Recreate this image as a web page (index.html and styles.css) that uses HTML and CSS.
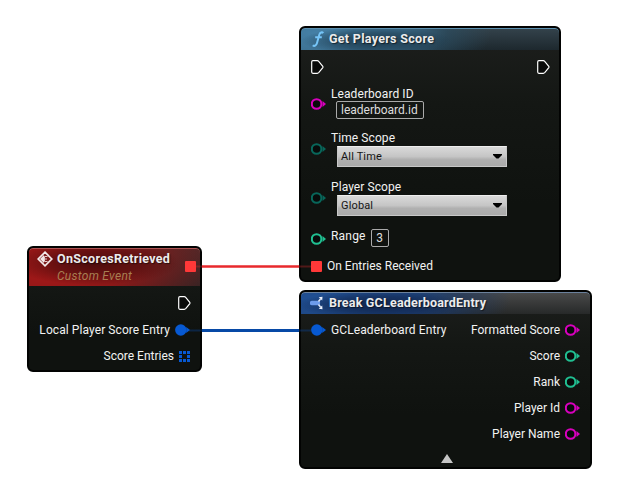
FILE: index.html
```html
<!DOCTYPE html>
<html lang="en">
<head>
<meta charset="utf-8">
<title>Blueprint graph</title>
<link rel="stylesheet" href="styles.css">
</head>
<body>
<svg class="defs" aria-hidden="true">
  <symbol id="pin" viewBox="0 0 16 12"><circle cx="5.6" cy="6" r="4.8" fill="#080b0a" stroke="currentColor" stroke-width="2.1"/><path d="M11.5 3L15 6L11.5 9Z" fill="currentColor"/></symbol>
  <symbol id="pin-full" viewBox="0 0 16 12"><circle cx="5.8" cy="6" r="5.7" fill="currentColor"/><path d="M11.2 3L15 6L11.2 9Z" fill="currentColor"/></symbol>
  <symbol id="exec" viewBox="0 0 13 14"><path d="M1.9.7H6.3Q7.1.7 7.7 1.3L11.8 6.4Q12.2 7 11.8 7.6L7.7 12.7Q7.1 13.3 6.3 13.3H1.9Q.7 13.3.7 12.1V1.9Q.7.7 1.9.7Z" fill="#090a09" stroke="#fff" stroke-width="1.2"/></symbol>
</svg>
<main class="graph">
  <section class="node call">
    <header class="head">
      <svg class="head-icon" width="16" height="18" viewBox="0 0 16 18"><path d="M13.2 3.2C12.2 1.8 10 2.1 9.2 5L7 13C6.3 15.7 4.3 16.6 2.8 15.2M5.2 7.2H11.8" fill="none" stroke="#76c5f8" stroke-width="2"/></svg>
      <h2>Get Players Score</h2>
    </header>
    <div class="row exec-row"><svg class="exec"><use href="#exec"/></svg><svg class="exec"><use href="#exec"/></svg></div>
    <div class="row field text-field"><svg class="pin magenta"><use href="#pin"/></svg><div><p>Leaderboard ID</p><span class="box id-box">leaderboard.id</span></div></div>
    <div class="row field"><svg class="pin enum"><use href="#pin"/></svg><div><p>Time Scope</p><div class="select"><span>All Time</span><svg width="9" height="5"><path d="M0 0H9V1L5.5 4.5H3.5L0 1Z"/></svg></div></div></div>
    <div class="row field"><svg class="pin enum"><use href="#pin"/></svg><div><p>Player Scope</p><div class="select"><span>Global</span><svg width="9" height="5"><path d="M0 0H9V1L5.5 4.5H3.5L0 1Z"/></svg></div></div></div>
    <div class="row range"><svg class="pin green"><use href="#pin"/></svg><p>Range</p><span class="box num-box">3</span></div>
    <div class="row delegate-row"><i class="delegate"></i><p>On Entries Received</p></div>
  </section>

  <section class="node event">
    <header class="head">
      <svg class="head-icon" width="16" height="16" viewBox="0 0 16 16"><path d="M8 1.2L14.8 8L8 14.8L1.2 8Z" fill="#7d1c1c" stroke="#f3e9e9" stroke-width="1.7"/><path d="M3 8L7 4V12Z" fill="#f3e9e9"/><path d="M10.5 5.5H7.5V10.5H10.5M7.5 8H10" fill="none" stroke="#e5caca" stroke-width="1"/></svg>
      <div class="titles"><h2>OnScoresRetrieved</h2><p class="sub">Custom Event</p></div>
      <i class="delegate"></i>
    </header>
    <div class="row out exec-out"><svg class="exec"><use href="#exec"/></svg></div>
    <div class="row out"><p class="local">Local Player Score Entry</p><svg class="pin blue"><use href="#pin-full"/></svg></div>
    <div class="row out array-row"><p>Score Entries</p><svg class="array" width="11" height="11" viewBox="0 0 11 11" shape-rendering="crispEdges"><path d="M0 0h3v3h-3zM4 0h3v3h-3zM8 0h3v3h-3zM0 4h3v3h-3zM8 4h3v3h-3zM0 8h3v3h-3zM4 8h3v3h-3zM8 8h3v3h-3z" fill="#0759d2"/></svg></div>
  </section>

  <section class="node break">
    <header class="head">
      <svg class="head-icon" width="14" height="16" viewBox="0 0 14 16"><path d="M2 8H8" stroke="#6d9cec" stroke-width="4.4" stroke-linecap="round"/><path d="M8.5 6.5L10.5 4M8.5 9.5L10.5 12" stroke="#dce6f8" stroke-width="1.6"/><path d="M8.7 2.3L12.5 1.7L12.2 5.5ZM8.7 13.7L12.5 14.3L12.2 10.5Z" fill="#edf2fc"/></svg>
      <h2>Break GCLeaderboardEntry</h2>
    </header>
    <div class="columns">
      <div class="row in"><svg class="pin blue"><use href="#pin-full"/></svg><p class="gc">GCLeaderboard Entry</p></div>
      <div>
        <div class="row out"><p>Formatted Score</p><svg class="pin magenta"><use href="#pin"/></svg></div>
        <div class="row out"><p>Score</p><svg class="pin green"><use href="#pin"/></svg></div>
        <div class="row out"><p>Rank</p><svg class="pin green"><use href="#pin"/></svg></div>
        <div class="row out"><p>Player Id</p><svg class="pin magenta"><use href="#pin"/></svg></div>
        <div class="row out"><p>Player Name</p><svg class="pin magenta"><use href="#pin"/></svg></div>
      </div>
    </div>
    <div class="collapse"><svg width="12" height="9"><path d="M6 0L12 9H0Z" fill="#c5c5c5"/></svg></div>
  </section>

  <svg class="wires" width="641" height="496">
    <path d="M202 266.5H299" stroke="#e8292d" stroke-width="2.4"/>
    <path d="M202 330.5H299" stroke="#0749a6" stroke-width="2.8"/>
    <path d="M196 266.5H202M299 266.5H311" stroke="#e8292d" stroke-width="2" opacity=".3"/>
    <path d="M189 330.5H202M299 330.5H311" stroke="#0749a6" stroke-width="2" opacity=".35"/>
  </svg>
</main>
</body>
</html>
```
FILE: styles.css
```css
* { box-sizing: border-box; }
body { margin: 0; background: #fff; font: 12px/16px Roboto, "Liberation Sans", sans-serif; color: #f2f2f2; }
h2, p { margin: 0; white-space: nowrap; }
h2 { font-size: 12.5px; line-height: 16px; font-weight: 700; letter-spacing: .3px; color: #ececec; text-shadow: 1px 1px 1px #0008; }
svg { display: block; flex: none; }
.defs { position: absolute; width: 0; height: 0; }
.graph { position: relative; width: 641px; height: 496px; overflow: hidden; }
.wires { position: absolute; left: 0; top: 0; }

.node { position: absolute; border: 2px solid #020302; border-radius: 6px; background: linear-gradient(#1d1f1d, #141714 30%, #0f120f 70%); overflow: hidden; }
.call { left: 299px; top: 26px; width: 262px; height: 256px; }
.event { left: 27px; top: 246px; width: 175px; height: 126px; }
.break { left: 299px; top: 290px; width: 293px; height: 179px; }

.head { display: flex; align-items: center; height: 22px; border-radius: 4px 4px 0 0; }
.call .head { padding-left: 9px; gap: 3px; background: radial-gradient(ellipse 75px 14px at 75px 13px, #1d3a4d, #1d3a4d88 60%, transparent), radial-gradient(ellipse 175px 60px at 15px 5px, #4580a6, #3a6a88 50%, #2a4f6599 75%, transparent), linear-gradient(#34434c, #1d282e); box-shadow: inset 0 1px #5d91b0; }
.break .head { padding-left: 9px; gap: 5px; background: radial-gradient(ellipse 85px 14px at 80px 13px, #10244b, #10244b88 60%, transparent), radial-gradient(ellipse 195px 65px at 15px 5px, #204f93, #1d437c 50%, #1b386599 75%, transparent), linear-gradient(#4a4b4b, #272929); box-shadow: inset 0 1px #6b819c; }
.break h2 { letter-spacing: .2px; }
.event .head { height: 38px; padding: 3px 4px 0 8px; align-items: flex-start; background: radial-gradient(ellipse 85px 22px at 65px 15px, #4b0d0d, #4b0d0d99 55%, transparent), radial-gradient(ellipse 175px 80px at 15px 18px, #a81818, #8c1818 45%, transparent), linear-gradient(#4b2a2a, #2c2525); box-shadow: inset 0 1px #ad5555; }
.event .titles { margin-left: 4px; flex: 1; }
.event .head .delegate { margin-top: 10px; }
.sub { color: #a77f52; font-style: italic; letter-spacing: .27px; padding-top: 1px; }

.row { display: flex; align-items: center; height: 26px; }
.pin { width: 16px; height: 12px; }
.magenta { color: #d800bd; }
.green { color: #20bf91; }
.enum { color: #08665a; }
.blue { color: #0759d2; }
.exec { width: 13px; height: 14px; }
.delegate { display: block; width: 11px; height: 11px; border-radius: 1px; background: #ff3838; }
.delegate-row .delegate { margin-right: 5px; }

.call .row { padding-left: 10px; gap: 4px; }
.call .exec-row { height: 34px; justify-content: space-between; padding-right: 9px; }
.call .field { height: 49px; align-items: flex-start; padding-top: 2px; }
.call .text-field { height: 44px; }
.field .pin { margin-top: 13px; }
.field p { letter-spacing: .08px; }
.text-field .pin { margin-top: 12px; }
.call .delegate-row { height: 28px; gap: 0; }
.range .pin { margin-bottom: 1px; }
.range p { letter-spacing: .2px; padding-bottom: 6px; }

.box { display: block; border: 1px solid #aaa; border-radius: 2px; color: #ddd; }
.id-box { width: 88px; height: 18px; margin: -1px 0 0 5px; padding-left: 4px; line-height: 16px; white-space: nowrap; }
.num-box { width: 18px; height: 18px; margin: 0 0 3px 1px; text-align: center; line-height: 16px; }
.select { display: flex; align-items: center; justify-content: space-between; width: 170px; height: 21px; margin-left: 6px; padding: 0 4px 0 3px; border: 1px solid #c8c8c8; border-top-color: #eee; background: linear-gradient(#d9d9d9, #c5c5c5 50%, #b0b0b0 65%, #aaa); color: #151515; font-size: 11px; letter-spacing: .15px; }

.out { justify-content: flex-end; gap: 3px; padding-right: 9px; }
.out p { margin-right: 1px; }
.event .exec-out { height: 31px; padding-top: 3px; }
.event .array-row { gap: 4px; padding-right: 10px; }
.event .out .local { letter-spacing: .08px; margin-right: 2px; }
.gc { letter-spacing: .1px; }
.columns { display: flex; justify-content: space-between; padding-top: 3px; }
.in { gap: 4px; padding-left: 10px; }
.break .out { padding-right: 9px; }
.break .out p { margin-right: 2px; }
.collapse { display: flex; justify-content: center; padding: 7px 0 0 2px; }
```
